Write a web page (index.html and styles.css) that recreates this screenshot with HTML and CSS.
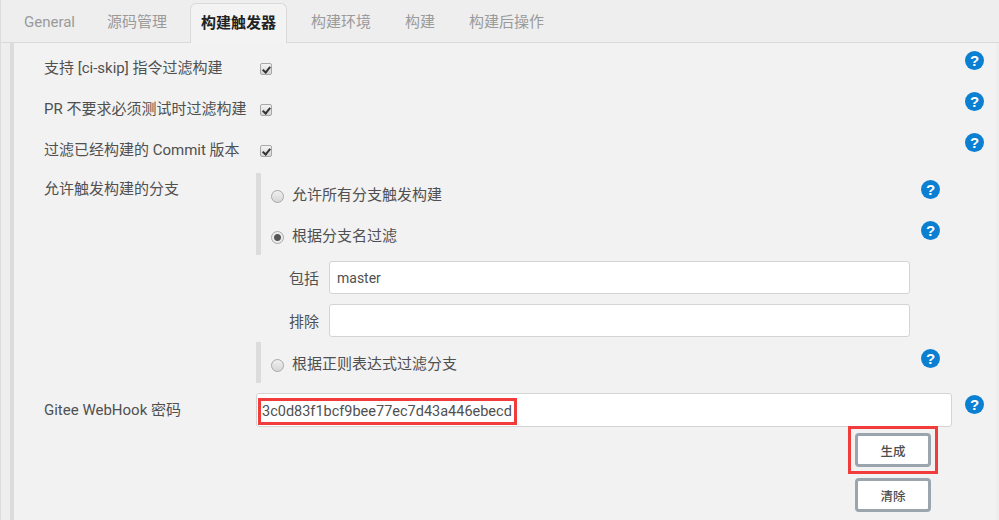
FILE: index.html
```html
<!DOCTYPE html>
<html lang="zh">

<head>
    <meta charset="UTF-8">
    <meta name="viewport" content="width=device-width, initial-scale=1.0">
    <title>构建触发器</title>
    <link rel="stylesheet" href="styles.css">
</head>

<body>
    <!-- 标签栏 -->
    <div class="tabs">
        <a class="tab">General</a>
        <a class="tab">源码管理</a>
        <a class="tab active">构建触发器</a>
        <a class="tab">构建环境</a>
        <a class="tab">构建</a>
        <a class="tab">构建后操作</a>
    </div>

    <div class="section">
        <div class="row">
            <label class="row-label">支持 [ci-skip] 指令过滤构建</label>
            <div class="row-field"><input type="checkbox" class="check" checked></div>
            <span class="help">?</span>
        </div>
        <div class="row">
            <label class="row-label">PR 不要求必须测试时过滤构建</label>
            <div class="row-field"><input type="checkbox" class="check" checked></div>
            <span class="help">?</span>
        </div>
        <div class="row">
            <label class="row-label">过滤已经构建的 Commit 版本</label>
            <div class="row-field"><input type="checkbox" class="check" checked></div>
            <span class="help">?</span>
        </div>

        <!-- 分支过滤 -->
        <div class="branch-row">
            <label class="row-label branch-label">允许触发构建的分支</label>
            <div class="branch-options">
                <div class="radio-group">
                    <div class="radio-row">
                        <input type="radio" class="radio" name="branch">
                        <span class="radio-text">允许所有分支触发构建</span>
                        <span class="help">?</span>
                    </div>
                    <div class="radio-row">
                        <input type="radio" class="radio" name="branch" checked>
                        <span class="radio-text">根据分支名过滤</span>
                        <span class="help">?</span>
                    </div>
                </div>
                <div class="filter-row">
                    <label class="filter-label">包括</label>
                    <input type="text" class="text-input" value="master">
                </div>
                <div class="filter-row">
                    <label class="filter-label">排除</label>
                    <input type="text" class="text-input">
                </div>
                <div class="radio-group last">
                    <div class="radio-row">
                        <input type="radio" class="radio" name="branch">
                        <span class="radio-text">根据正则表达式过滤分支</span>
                        <span class="help">?</span>
                    </div>
                </div>
            </div>
        </div>

        <!-- WebHook 密码 -->
        <div class="secret-row">
            <label class="row-label secret-label">Gitee WebHook 密码</label>
            <div class="secret-field">
                <div class="secret-input"><span class="secret-value">3c0d83f1bcf9bee77ec7d43a446ebecd</span></div>
                <div class="mark-box"><button class="btn">生成</button></div>
                <button class="btn btn-clear">清除</button>
            </div>
            <span class="help">?</span>
        </div>
    </div>
</body>

</html>
```

FILE: styles.css
```css
* {
    margin: 0;
    padding: 0;
    box-sizing: border-box;
}

html,
body {
    height: 100%;
}

body {
    display: flex;
    flex-direction: column;
    background-color: #eeeeee;
    font-family: Roboto, "Noto Sans CJK SC", sans-serif;
    font-size: 15px;
    color: #505050;
    overflow: hidden;
    border-left: 1px solid #dcdcdc;
}

/* 标签栏 */
.tabs {
    flex: none;
    display: flex;
    align-items: flex-end;
    height: 43px;
    padding: 3px 0 0 11px;
    background-color: #eeeeee;
    border-bottom: 1px solid #d9d9d9;
}

.tab {
    height: 39px;
    line-height: 38px;
    padding: 0 12px;
    margin-right: 10px;
    color: #9a9a9a;
    white-space: nowrap;
}

.tab:first-child {
    margin-right: 8px;
}

.tab.active {
    position: relative;
    top: 1px;
    width: 97px;
    height: 40px;
    padding: 0 10px;
    margin: 0 12px 0 1px;
    background-color: #f3f3f3;
    color: #222222;
    font-weight: 700;
    border: 1px solid #d9d9d9;
    border-bottom: none;
    border-radius: 6px 6px 0 0;
}

/* 表单区域 */
.section {
    flex: 1;
    min-height: 0;
    margin-left: 9px;
    margin-right: 3px;
    padding: 3px 0 0 30px;
    background-color: #f2f2f2;
    border-left: 4px solid #dcdcdc;
}

.row {
    display: flex;
    height: 41px;
    align-items: center;
}

.row-label {
    flex: none;
    width: 212px;
    white-space: nowrap;
}

.row-field {
    flex: 1;
    display: flex;
    align-items: center;
    padding: 4px 0 0 4px;
}

.help {
    flex: none;
    display: block;
    width: 19px;
    height: 19px;
    margin-bottom: 12px;
    border-radius: 50%;
    background-color: #0b7fd1;
    color: #ffffff;
    font-family: "Liberation Sans", sans-serif;
    font-size: 15px;
    font-weight: 700;
    line-height: 19px;
    text-align: center;
}

.row .help {
    margin-right: 12px;
}

.check {
    appearance: none;
    position: relative;
    display: block;
    width: 12px;
    height: 12px;
    border: 1px solid #a8a8a8;
    border-radius: 2px;
    background: linear-gradient(#f4f4f4, #d4d4d4);
}

.check:checked::after {
    content: "";
    position: absolute;
    top: 1px;
    left: 3px;
    width: 3px;
    height: 6px;
    border: solid #333333;
    border-width: 0 2px 2px 0;
    transform: rotate(40deg);
}

/* 分支过滤 */
.branch-row {
    display: flex;
    margin-top: 4px;
}

.branch-label {
    padding-top: 4px;
}

.branch-options {
    width: 684px;
}

.radio-group {
    border-left: 5px solid #dcdcdc;
}

.radio-group.last {
    margin-top: 5px;
}

.radio-row {
    display: flex;
    height: 41px;
    align-items: center;
    padding-left: 10px;
}

.radio {
    appearance: none;
    flex: none;
    width: 13px;
    height: 13px;
    margin: 6px 8px 0 0;
    border: 1px solid #a8a8a8;
    border-radius: 50%;
    background: linear-gradient(#f0f0f0, #d6d6d6);
}

.radio:checked {
    background: radial-gradient(circle, #555555 0, #555555 3px, #ececec 4px);
}

.radio-text {
    flex: 1;
}

.radio-row .help {
    margin: 0 0 9px 0;
}

.filter-row {
    display: flex;
    align-items: center;
    height: 33px;
    margin-top: 6px;
    padding-left: 33px;
}

.filter-row + .filter-row {
    margin-top: 10px;
}

.filter-label {
    flex: none;
    width: 40px;
}

.text-input {
    width: 581px;
    height: 33px;
    padding: 0 7px;
    border: 1px solid #d4d4d4;
    border-radius: 3px;
    background-color: #ffffff;
    font: inherit;
    font-size: 14px;
    color: #505050;
}

/* WebHook 密码 */
.secret-row {
    display: flex;
    margin-top: 10px;
}

.secret-label {
    padding-top: 5px;
}

.secret-field {
    display: flex;
    flex-direction: column;
    align-items: flex-end;
    width: 696px;
    padding-right: 14px;
}

.secret-input {
    width: 696px;
    margin-right: -14px;
    height: 34px;
    padding-top: 4px;
    padding-left: 1px;
    border: 1px solid #d4d4d4;
    border-radius: 3px;
    background-color: #ffffff;
}

/* 红色标注框 */
.secret-value {
    display: block;
    width: 259px;
    height: 27px;
    line-height: 22px;
    border: 3px solid #f23c3c;
    font-size: 14.5px;
    padding-left: 1px;
    white-space: nowrap;
}

.mark-box {
    margin-top: -1px;
    padding: 4px;
    border: 3px solid #f23c3c;
}

.btn {
    display: block;
    width: 76px;
    height: 34px;
    border: 3px solid #9aa5ad;
    border-radius: 4px;
    background-color: #ffffff;
    font-family: inherit;
    font-size: 12.5px;
    font-weight: 500;
    color: #4d4d4d;
}

.btn-clear {
    margin: 4px 7px 0 0;
}

.secret-row .help {
    margin: 2px 0 0 13px;
}
```
